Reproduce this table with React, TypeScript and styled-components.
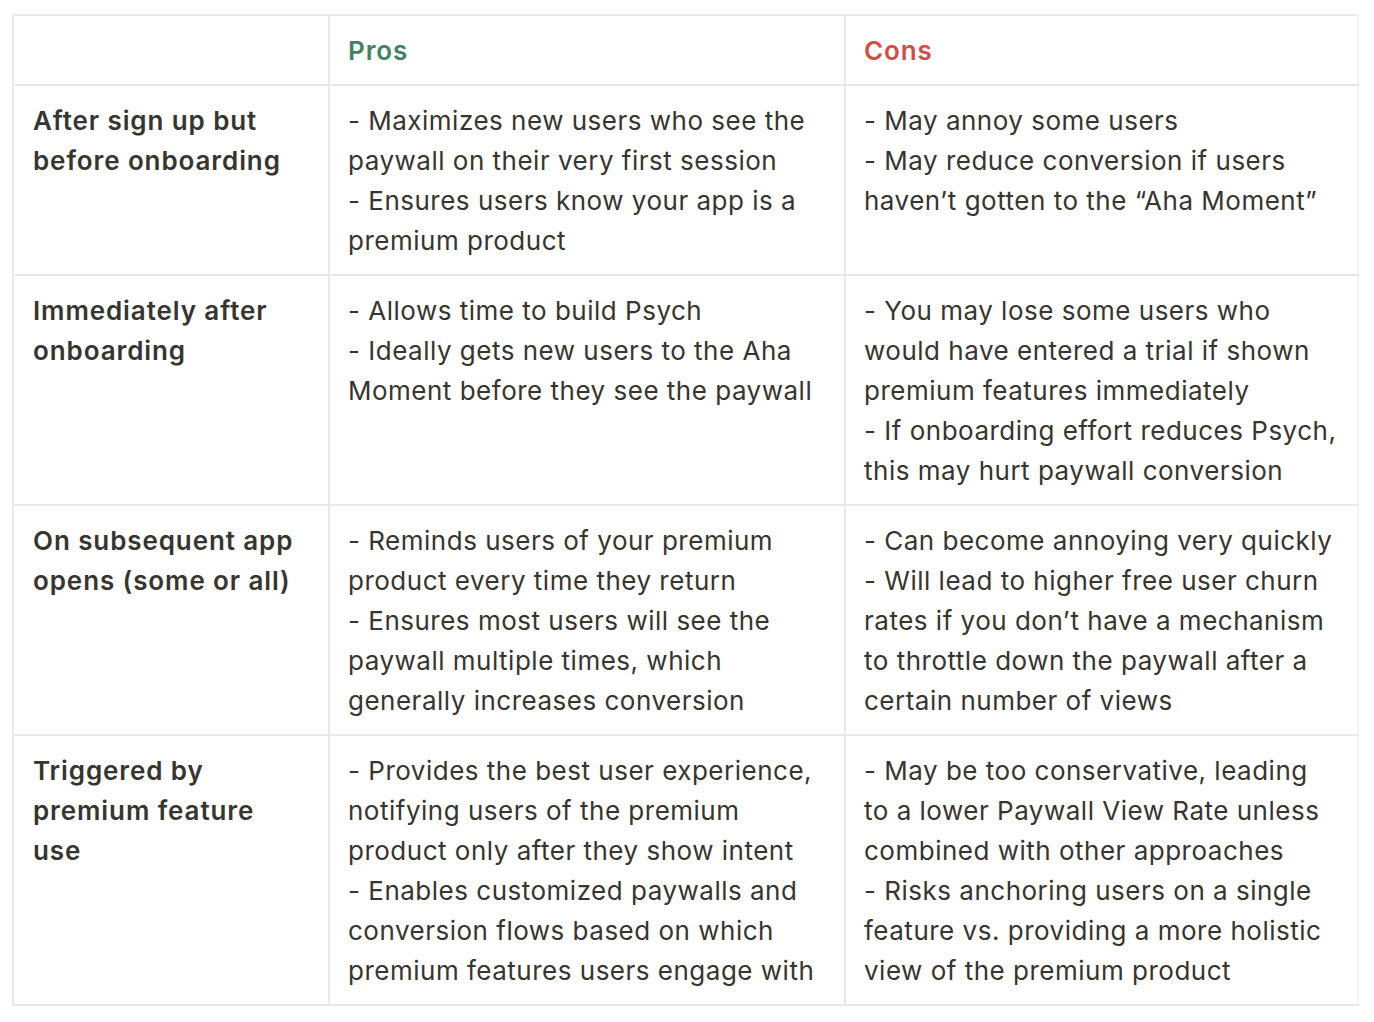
import React from "react";
import styled, { createGlobalStyle } from "styled-components";

const Global = createGlobalStyle`
  html, body { margin: 0; padding: 0; background: #ffffff; }
  body {
    font-family: Inter, "Noto Sans", "Liberation Sans", sans-serif;
    color: rgb(55, 53, 47);
    -webkit-font-smoothing: antialiased;
  }
`;

const Page = styled.div`
  padding: 14px 0 0 12px;
`;

const Table = styled.table`
  border-collapse: collapse;
  table-layout: fixed;
  width: 1345px;
`;

const Col = styled.col<{ $w: number }>`
  width: ${(p) => p.$w}px;
`;

const Cell = styled.td<{ $last?: boolean }>`
  border: 2px solid #e9e9e7;
  ${(p) => (p.$last ? "border-right-color: #f3f3f2;" : "")}
  padding: 15px 8px 13px 18px;
  vertical-align: top;
  font-size: 26px;
  line-height: 40px;
  font-weight: 400;
  letter-spacing: 0.5px;
`;

const Head = styled(Cell)<{ $tone?: "pros" | "cons" }>`
  font-weight: 600;
  letter-spacing: 0.9px;
  color: ${(p) => (p.$tone === "pros" ? "#448361" : p.$tone === "cons" ? "#d44c47" : "inherit")};
`;

const RowHead = styled(Cell)`
  font-weight: 600;
  letter-spacing: 0.9px;
  padding-left: 19px;
`;

const Line = styled.div`
  white-space: nowrap;
`;

type Row = { title: string[]; pros: string[]; cons: string[] };

const rows: Row[] = [
  {
    title: ["After sign up but", "before onboarding"],
    pros: [
      "- Maximizes new users who see the",
      "paywall on their very first session",
      "- Ensures users know your app is a",
      "premium product",
    ],
    cons: [
      "- May annoy some users",
      "- May reduce conversion if users",
      "haven\u2019t gotten to the \u201cAha Moment\u201d",
    ],
  },
  {
    title: ["Immediately after", "onboarding"],
    pros: [
      "- Allows time to build Psych",
      "- Ideally gets new users to the Aha",
      "Moment before they see the paywall",
    ],
    cons: [
      "- You may lose some users who",
      "would have entered a trial if shown",
      "premium features immediately",
      "- If onboarding effort reduces Psych,",
      "this may hurt paywall conversion",
    ],
  },
  {
    title: ["On subsequent app", "opens (some or all)"],
    pros: [
      "- Reminds users of your premium",
      "product every time they return",
      "- Ensures most users will see the",
      "paywall multiple times, which",
      "generally increases conversion",
    ],
    cons: [
      "- Can become annoying very quickly",
      "- Will lead to higher free user churn",
      "rates if you don\u2019t have a mechanism",
      "to throttle down the paywall after a",
      "certain number of views",
    ],
  },
  {
    title: ["Triggered by", "premium feature", "use"],
    pros: [
      "- Provides the best user experience,",
      "notifying users of the premium",
      "product only after they show intent",
      "- Enables customized paywalls and",
      "conversion flows based on which",
      "premium features users engage with",
    ],
    cons: [
      "- May be too conservative, leading",
      "to a lower Paywall View Rate unless",
      "combined with other approaches",
      "- Risks anchoring users on a single",
      "feature vs. providing a more holistic",
      "view of the premium product",
    ],
  },
];

export default function App() {
  return (
    <Page>
      <Global />
      <Table>
        <colgroup>
          <Col $w={316} />
          <Col $w={516} />
          <Col $w={513} />
        </colgroup>
        <thead>
          <tr>
            <Head></Head>
            <Head $tone="pros">Pros</Head>
            <Head $tone="cons" $last>Cons</Head>
          </tr>
        </thead>
        <tbody>
          {rows.map((r) => (
            <tr key={r.title.join(" ")}>
              <RowHead>
                {r.title.map((t) => (
                  <Line key={t}>{t}</Line>
                ))}
              </RowHead>
              <Cell>
                {r.pros.map((t) => (
                  <Line key={t}>{t}</Line>
                ))}
              </Cell>
              <Cell $last>
                {r.cons.map((t) => (
                  <Line key={t}>{t}</Line>
                ))}
              </Cell>
            </tr>
          ))}
        </tbody>
      </Table>
    </Page>
  );
}
